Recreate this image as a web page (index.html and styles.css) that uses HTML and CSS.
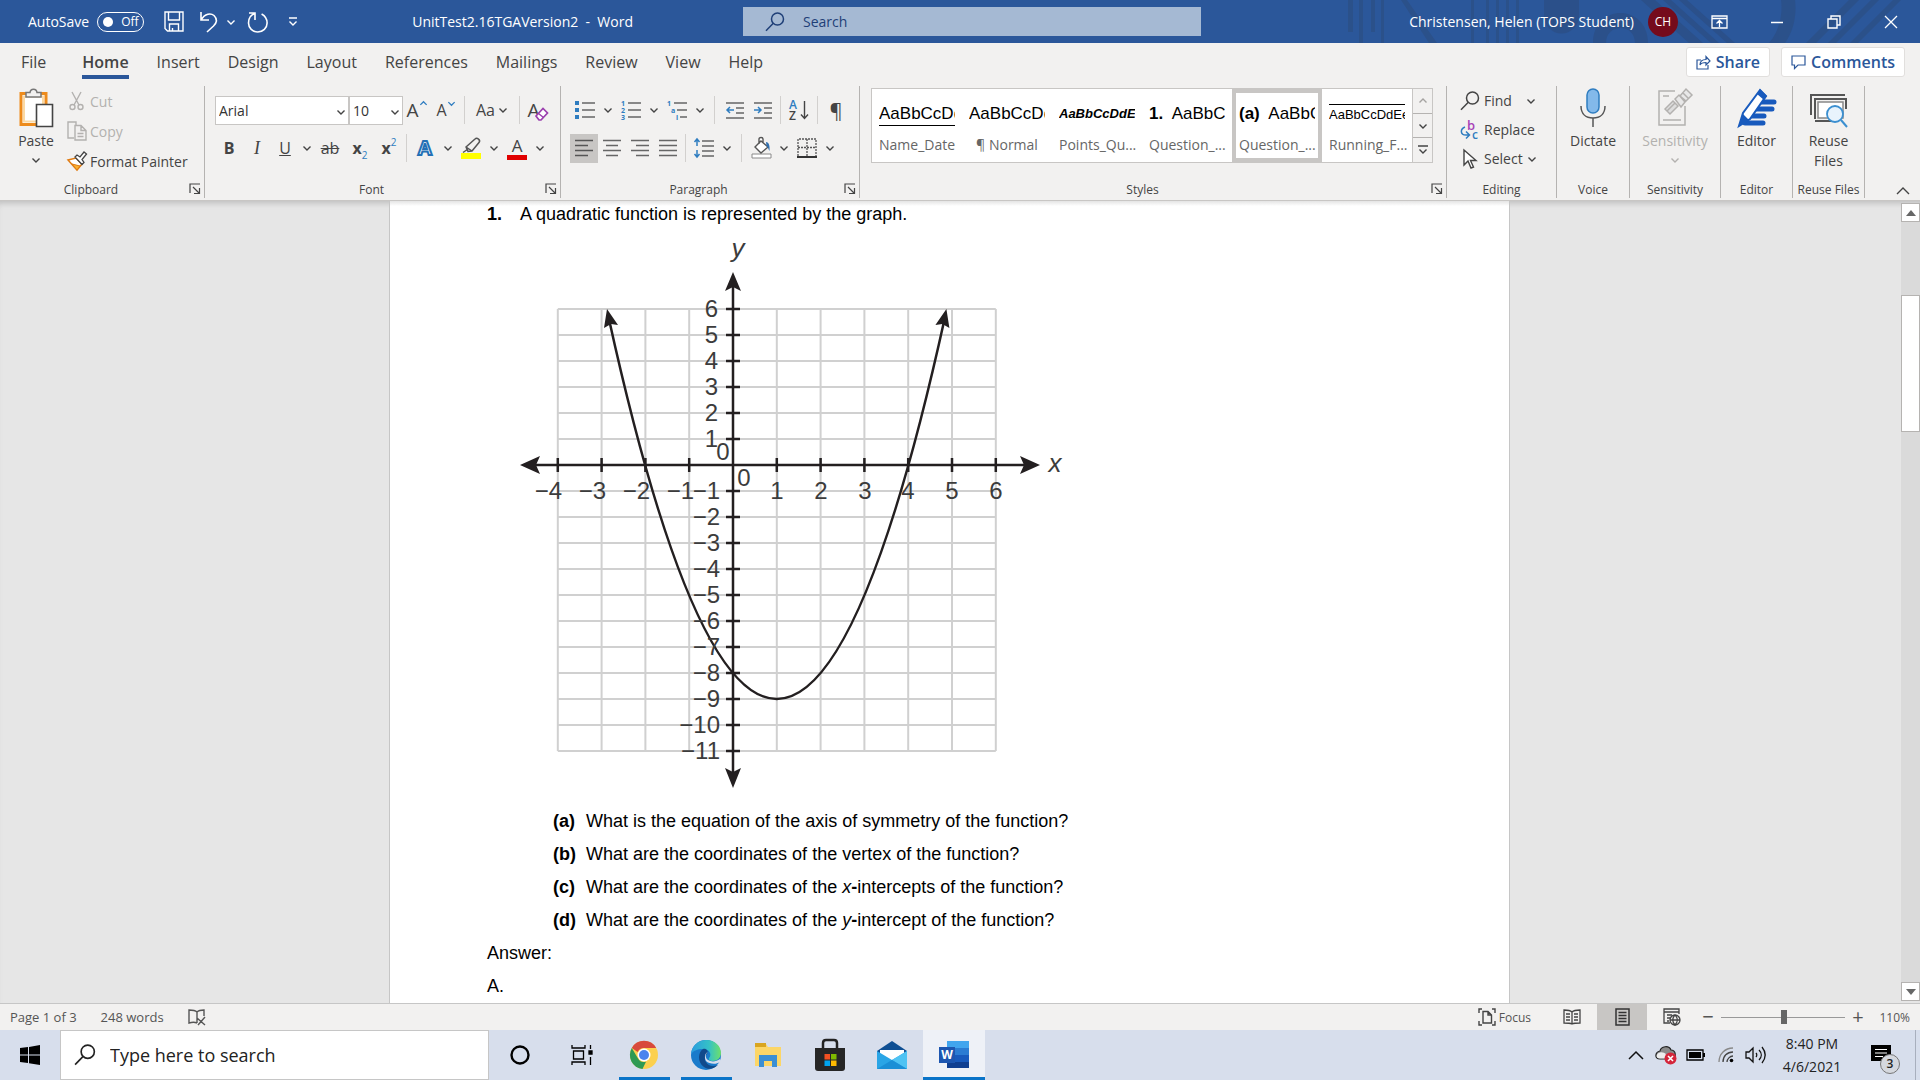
FILE: index.html
```html
<!DOCTYPE html>
<html lang="en">
<head>
    <meta charset="UTF-8">
    <meta name="viewport" content="width=device-width, initial-scale=1.0">
    <title>UnitTest2.16TGAVersion2 - Word</title>
    <link rel="stylesheet" href="styles.css">
</head>
<body>
    <!-- Shared icons -->
    <svg class="sprite" aria-hidden="true">
        <symbol id="chev" viewBox="0 0 10 10"><path d="M1.5 3.5 5 7l3.500-3.500" fill="none" stroke="currentColor" stroke-width="1.4"/></symbol>
        <symbol id="chev-up" viewBox="0 0 10 10"><path d="M1.500 6.500 5 3l3.500 3.500" fill="none" stroke="currentColor" stroke-width="1.4"/></symbol>
        <symbol id="launch" viewBox="0 0 12 12"><path d="M1 10V1h10M4 4l6 6M10.500 5v5.500H5" fill="none" stroke="currentColor" stroke-width="1.2"/></symbol>
        <symbol id="glass" viewBox="0 0 20 20"><g fill="none" stroke="currentColor" stroke-width="1.500"><circle cx="12.500" cy="7" r="6"/><path d="M8.300 11.300 1 18.700"/></g></symbol>
    </svg>

    <!-- Title bar -->
    <header class="titlebar">
        <svg class="titlebar-art" viewBox="0 0 580 43" aria-hidden="true">
            <g fill="#2b4c80" opacity=".6">
                <path d="M7 0h5v32H7zM18 0h4v43h-4zM30 0h4v32h-4zM40 0h3v43h-3zM60 0h6l30 43h-8zM130 0h3v43h-3zM145 0h3v43h-3zM155 0h3v43h-3zM165 0h3v43h-3zM175 0h3v43h-3z"/>
                <path d="M203 0h35v16a17 17 0 0 1-35 0z"/>
                <path d="M252 43c0-40 55-40 55 0h-13c0-20-29-20-29 0z"/>
                <path d="M300 0h14l48 43h-14zM322 0h8l48 43h-8zM338 0h8l48 43h-8zM440 0h14c2 16-2 32-10 43h-16c10-11 14-28 12-43zM508 0h10l-43 43h-10zM530 0h8l-43 43h-8zM552 0h8l-43 43h-8z"/>
            </g>
        </svg>
        <div class="quick-access">
            <label class="autosave">AutoSave
                <input type="checkbox" class="autosave-input">
                <span class="autosave-switch">Off</span>
            </label>
            <button class="qa-btn" aria-label="Save"><svg width="20" height="21" viewBox="0 0 20 21" fill="none" stroke="#fff" stroke-width="1.400"><path d="M1 1h18v19H3.500L1 17.500zM4.500 1v8h11V1M5.500 20v-7h9v7M8.500 20v-3"/></svg></button>
            <button class="qa-btn" aria-label="Undo"><svg width="20" height="22" viewBox="0 0 20 22" fill="none" stroke="#fff" stroke-width="1.600"><path d="M2 1v8h8M2 9C6 2 12 2 15 4.500c4 4 2 8-.5 10.500L8 21"/></svg></button>
            <button class="qa-chev" aria-label="Undo history"><svg width="10" height="10"><use href="#chev"/></svg></button>
            <button class="qa-btn redo" aria-label="Redo"><svg width="22" height="22" viewBox="0 0 22 22" fill="none" stroke="#fff" stroke-width="1.600"><path d="M2 2h6v7M8 2.500C3 4 1.500 8 1.500 12a9.300 9 0 0 0 18.600 0c0-4-2-7-5.500-9"/></svg></button>
            <button class="qa-btn" aria-label="Customize Quick Access Toolbar"><svg width="10" height="12" viewBox="0 0 10 12" fill="none" stroke="#fff" stroke-width="1.400"><path d="M1 2h8M1.500 5.500 5 9l3.500-3.500"/></svg></button>
            <h1 class="doc-title">UnitTest2.16TGAVersion2&nbsp; -&nbsp; Word</h1>
        </div>
        <label class="title-search">
            <svg width="20" height="20"><use href="#glass"/></svg>
            <input type="search" placeholder="Search" aria-label="Search">
        </label>
        <div class="account">
            <span class="user-name">Christensen, Helen (TOPS Student)</span>
            <span class="avatar">CH</span>
            <button class="win-btn" aria-label="Ribbon Display Options"><svg width="17" height="14" viewBox="0 0 17 14" fill="none" stroke="#fff" stroke-width="1.300"><path d="M1 1h15v12H1zM1 3.500h15M8.500 12V6M5.500 8.500l3-3 3 3"/></svg></button>
            <button class="win-btn" aria-label="Minimize"><svg width="14" height="14" viewBox="0 0 14 14" stroke="#fff" stroke-width="1.500"><path d="M1 7.500h12"/></svg></button>
            <button class="win-btn" aria-label="Restore"><svg width="14" height="14" viewBox="0 0 14 14" fill="none" stroke="#fff" stroke-width="1.400"><path d="M1 4h9v9H1zM4 4V1h9v9h-3"/></svg></button>
            <button class="win-btn" aria-label="Close"><svg width="14" height="14" viewBox="0 0 14 14" stroke="#fff" stroke-width="1.300"><path d="m1 1 12 12M13 1 1 13"/></svg></button>
        </div>
    </header>

    <!-- Ribbon tabs -->
    <nav class="tabs">
        <a href="#file" class="tab tab-file">File</a>
        <a href="#home" class="tab active">Home</a>
        <a href="#insert" class="tab">Insert</a>
        <a href="#design" class="tab">Design</a>
        <a href="#layout" class="tab">Layout</a>
        <a href="#references" class="tab">References</a>
        <a href="#mailings" class="tab">Mailings</a>
        <a href="#review" class="tab">Review</a>
        <a href="#view" class="tab">View</a>
        <a href="#help" class="tab">Help</a>
        <div class="tab-actions">
            <button class="action-btn"><svg width="15" height="15" viewBox="0 0 15 15" fill="none" stroke="currentColor" stroke-width="1.200"><path d="M5 5H1v9h11v-4M4 10c0-4 3-5.500 6-5.500V1.500L14 6l-4 4V7.500C7 7.500 5 8 4 10z"/></svg>Share</button>
            <button class="action-btn"><svg width="15" height="15" viewBox="0 0 15 15" fill="none" stroke="currentColor" stroke-width="1.200"><path d="M1 1h13v9H7l-3.500 3.500V10H1z"/></svg>Comments</button>
        </div>
    </nav>

    <!-- Ribbon -->
    <section class="ribbon">
        <div class="group clipboard">
            <div class="group-body">
                <button class="big-btn paste">
                    <svg width="36" height="40" viewBox="0 0 36 40"><path d="M3 5.500h25v31H3z" fill="#fff" stroke="#ed8b1c" stroke-width="3"/><path d="M6 8.500h19v25H6z" fill="#fff" stroke="#fbd9a4" stroke-width="2"/><path d="M8 9V4.500h4C12.500 0 18.500 0 19 4.500h4V9z" fill="#f2f1f0" stroke="#777" stroke-width="1.500"/><path d="M18.500 16.500h16v22h-16z" fill="#fff" stroke="#444" stroke-width="1.600"/></svg>
                    <span>Paste</span>
                    <svg class="chev" width="10" height="10"><use href="#chev"/></svg>
                </button>
                <div class="stack clip-stack">
                    <button class="text-btn" disabled><svg width="20" height="20" viewBox="0 0 20 20" fill="none" stroke="currentColor" stroke-width="1.400"><path d="m5 1 7 13M14 1 7 14"/><circle cx="5.500" cy="16" r="2.500"/><circle cx="13.500" cy="16" r="2.500"/></svg>Cut</button>
                    <button class="text-btn" disabled><svg width="20" height="20" viewBox="0 0 20 20" fill="none" stroke="currentColor" stroke-width="1.400"><path d="M7 17H1V1h8v3M8 4.500h6l5 5V19H8zM14 4.500v5h5M10.500 12.500h6M10.500 15.500h6"/></svg>Copy</button>
                    <button class="text-btn"><svg width="20" height="20" viewBox="0 0 20 20"><path d="m1 9 8-2 6 6-5 6z" fill="#fff" stroke="#e07b12" stroke-width="1.500"/><path d="m5 13 8 2-3 4z" fill="#f9b233" stroke="#e07b12"/><path d="m8 6 2-2 3 2 4-5 2.500 2-4.500 5.500 2 3-2 2z" fill="#fff" stroke="#444" stroke-width="1.300"/></svg>Format Painter</button>
                </div>
            </div>
            <div class="group-name has-launcher">Clipboard<button class="launcher" aria-label="Clipboard settings"><svg width="12" height="12"><use href="#launch"/></svg></button></div>
        </div>

        <div class="group font">
            <div class="group-body rows">
                <div class="row">
                    <span class="combo combo-name"><select aria-label="Font"><option>Arial</option></select><svg width="10" height="10"><use href="#chev"/></svg></span>
                    <span class="combo combo-size"><select aria-label="Font size"><option>10</option></select><svg width="10" height="10"><use href="#chev"/></svg></span>
                    <button class="tool" aria-label="Grow font"><span class="letter lg">A</span><svg class="sup blue" width="9" height="9"><use href="#chev-up"/></svg></button>
                    <button class="tool wide" aria-label="Shrink font"><span class="letter">A</span><svg class="sup blue" width="9" height="9"><use href="#chev"/></svg></button>
                    <span class="sep"></span>
                    <button class="tool case" aria-label="Change case"><span class="letter">Aa</span><svg width="10" height="10"><use href="#chev"/></svg></button>
                    <span class="sep"></span>
                    <button class="tool wide" aria-label="Clear formatting"><span class="letter lg">A</span><svg class="eraser" width="14" height="14" viewBox="0 0 14 14"><path d="M1 9 8 1.500 12.500 6 6 13H4z" fill="#fff" stroke="#9b3fae" stroke-width="1.700"/><path d="m3.500 6.500 5 4" stroke="#9b3fae" stroke-width="1.500"/></svg></button>
                </div>
                <div class="row">
                    <button class="tool"><b>B</b></button>
                    <button class="tool"><i class="serif">I</i></button>
                    <button class="tool"><u>U</u></button>
                    <button class="drop" aria-label="Underline options"><svg width="10" height="10"><use href="#chev"/></svg></button>
                    <button class="tool wide"><s>ab</s></button>
                    <button class="tool wide script"><b>x</b><sub>2</sub></button>
                    <button class="tool script"><b>x</b><sup>2</sup></button>
                    <span class="sep"></span>
                    <button class="tool wide"><b class="effect">A</b></button>
                    <button class="drop" aria-label="Text effects"><svg width="10" height="10"><use href="#chev"/></svg></button>
                    <button class="tool wide" aria-label="Highlight"><svg width="22" height="22" viewBox="0 0 22 22"><path d="M1 16h20v6H1z" fill="#ffff00"/><path d="m6 10 9-8c2-2 6 1 4 3.500L12 14l-4 .5zM6 10l6 4M8 12l-5 3.500" fill="none" stroke="#555" stroke-width="1.500"/></svg></button>
                    <button class="drop" aria-label="Highlight colors"><svg width="10" height="10"><use href="#chev"/></svg></button>
                    <button class="tool wide"><span class="font-color">A</span></button>
                    <button class="drop" aria-label="Font colors"><svg width="10" height="10"><use href="#chev"/></svg></button>
                </div>
            </div>
            <div class="group-name has-launcher">Font<button class="launcher" aria-label="Font settings"><svg width="12" height="12"><use href="#launch"/></svg></button></div>
        </div>

        <div class="group paragraph">
            <div class="group-body rows">
                <div class="row">
                    <button class="tool wide" aria-label="Bullets"><svg width="20" height="20" viewBox="0 0 20 20"><path d="M0 1h4v4H0zM0 8h4v4H0zM0 15h4v4H0z" fill="#2f7dc0"/><path d="M7 3h13M7 10h13M7 17h13" stroke="#666" stroke-width="1.500"/></svg></button>
                    <button class="drop" aria-label="Bullet library"><svg width="10" height="10"><use href="#chev"/></svg></button>
                    <button class="tool wide" aria-label="Numbering"><svg width="20" height="20" viewBox="0 0 20 20"><path d="M7 3h13M7 10h13M7 17h13" stroke="#666" stroke-width="1.500"/><g class="tiny"><text x="0" y="6">1</text><text x="0" y="13">2</text><text x="0" y="20">3</text></g></svg></button>
                    <button class="drop" aria-label="Numbering library"><svg width="10" height="10"><use href="#chev"/></svg></button>
                    <button class="tool wide" aria-label="Multilevel list"><svg width="20" height="20" viewBox="0 0 20 20"><path d="M7 3h13M10 10h10M13 17h7" stroke="#666" stroke-width="1.500"/><g class="tiny"><text x="0" y="6">1</text><text x="4" y="13">a</text><text x="9" y="20">i</text></g></svg></button>
                    <button class="drop" aria-label="List library"><svg width="10" height="10"><use href="#chev"/></svg></button>
                    <span class="sep loose"></span>
                    <button class="tool" aria-label="Decrease indent"><svg width="20" height="18" viewBox="0 0 20 18"><path d="M1 2h18M11 7h8M11 12h8M1 17h18" stroke="#666" stroke-width="1.500"/><path d="M9 9H2M5 6 2 9l3 3" fill="none" stroke="#2f7dc0" stroke-width="1.500"/></svg></button>
                    <button class="tool" aria-label="Increase indent"><svg width="20" height="18" viewBox="0 0 20 18"><path d="M1 2h18M11 7h8M11 12h8M1 17h18" stroke="#666" stroke-width="1.500"/><path d="M1 9h7M5 6l3 3-3 3" fill="none" stroke="#2f7dc0" stroke-width="1.500"/></svg></button>
                    <span class="sep"></span>
                    <button class="tool wide" aria-label="Sort"><svg width="22" height="22" viewBox="0 0 22 22"><text x="1" y="10" class="sort-a">A</text><text x="1" y="21" class="sort-z">Z</text><path d="M16.500 2v17M13 15.500l3.500 4 3.500-4" fill="none" stroke="#444" stroke-width="1.400"/></svg></button>
                    <span class="sep"></span>
                    <button class="tool wide" aria-label="Show paragraph marks"><span class="pilcrow">¶</span></button>
                </div>
                <div class="row">
                    <button class="tool selected" aria-label="Align left"><svg width="18" height="18" viewBox="0 0 18 18" stroke="#555" stroke-width="1.500"><path d="M0 1.500h18M0 6.500h13M0 11.500h18M0 16.500h13"/></svg></button>
                    <button class="tool" aria-label="Center"><svg width="18" height="18" viewBox="0 0 18 18" stroke="#666" stroke-width="1.500"><path d="M0 1.500h18M3 6.500h12M0 11.500h18M3 16.500h12"/></svg></button>
                    <button class="tool" aria-label="Align right"><svg width="18" height="18" viewBox="0 0 18 18" stroke="#666" stroke-width="1.500"><path d="M0 1.500h18M5 6.500h13M0 11.500h18M5 16.500h13"/></svg></button>
                    <button class="tool" aria-label="Justify"><svg width="18" height="18" viewBox="0 0 18 18" stroke="#666" stroke-width="1.500"><path d="M0 1.500h18M0 6.500h18M0 11.500h18M0 16.500h18"/></svg></button>
                    <span class="sep"></span>
                    <button class="tool wide" aria-label="Line spacing"><svg width="20" height="20" viewBox="0 0 20 20" fill="none"><path d="M8 3h12M8 8h12M8 13h12M8 18h12" stroke="#666" stroke-width="1.500"/><path d="M3 1v7M.5 4 3 1l2.500 3M3 12v7M.5 16 3 19l2.500-3" stroke="#2f7dc0" stroke-width="1.500"/></svg></button>
                    <button class="drop" aria-label="Line spacing options"><svg width="10" height="10"><use href="#chev"/></svg></button>
                    <span class="sep loose"></span>
                    <button class="tool" aria-label="Shading"><svg width="22" height="22" viewBox="0 0 22 22"><path d="M1 17h19v4H1z" fill="#fff" stroke="#8a8a8a"/><path d="m10 4 7 6-7 6-6-6zM8 7V2c0-2 4-2 4 0v4" fill="#fff" stroke="#555" stroke-width="1.400"/><path d="M15 5c3 0 4 4 3.500 9-1.500-2-1-4-3-5z" fill="#2f6fb0"/></svg></button>
                    <button class="drop" aria-label="Shading colors"><svg width="10" height="10"><use href="#chev"/></svg></button>
                    <button class="tool wide" aria-label="Borders"><svg width="20" height="20" viewBox="0 0 20 20" fill="none" stroke="#555"><path d="M1 18V1h18v17M10 1v17M1 9.500h18" stroke-dasharray="2 1" stroke-width="1.300"/><path d="M0 19h20" stroke="#333" stroke-width="2"/></svg></button>
                    <button class="drop" aria-label="Border options"><svg width="10" height="10"><use href="#chev"/></svg></button>
                </div>
            </div>
            <div class="group-name has-launcher">Paragraph<button class="launcher" aria-label="Paragraph settings"><svg width="12" height="12"><use href="#launch"/></svg></button></div>
        </div>

        <div class="group styles">
            <div class="group-body">
                <div class="gallery">
                    <button class="style"><span class="sample underlined">AaBbCcDd</span><span class="style-name">Name_Date</span></button>
                    <button class="style"><span class="sample">AaBbCcDd</span><span class="style-name">¶ Normal</span></button>
                    <button class="style"><span class="sample small strong-italic">AaBbCcDdE</span><span class="style-name">Points_Qu...</span></button>
                    <button class="style"><span class="sample"><b>1.</b>&nbsp; AaBbC</span><span class="style-name">Question_...</span></button>
                    <button class="style current"><span class="sample"><b>(a)</b>&nbsp; AaBbCc</span><span class="style-name">Question_...</span></button>
                    <button class="style"><span class="sample small overlined">AaBbCcDdEe</span><span class="style-name">Running_F...</span></button>
                    <div class="gallery-scroll">
                        <button aria-label="Previous row" disabled><svg width="10" height="10"><use href="#chev-up"/></svg></button>
                        <button aria-label="Next row"><svg width="10" height="10"><use href="#chev"/></svg></button>
                        <button aria-label="More styles"><svg width="10" height="12" viewBox="0 0 10 12" fill="none" stroke="currentColor" stroke-width="1.400"><path d="M0 2h10M1.500 5.500 5 9l3.500-3.500"/></svg></button>
                    </div>
                </div>
            </div>
            <div class="group-name has-launcher">Styles<button class="launcher" aria-label="Styles pane"><svg width="12" height="12"><use href="#launch"/></svg></button></div>
        </div>

        <div class="group editing">
            <div class="group-body">
                <div class="stack edit-stack">
                    <button class="text-btn"><svg width="20" height="20"><use href="#glass"/></svg>Find<svg class="chev" width="10" height="10"><use href="#chev"/></svg></button>
                    <button class="text-btn"><svg width="20" height="20" viewBox="0 0 20 20"><text x="7" y="10" class="rep-b">b</text><text x="12" y="19" class="rep-c">c</text><path d="M5 7c-5 2-5 8 1 8h3M6 11.500 9.500 15 6 18.500" fill="none" stroke="#2f7dc0" stroke-width="1.500"/></svg>Replace</button>
                    <button class="text-btn"><svg width="20" height="20" viewBox="0 0 20 20"><path d="M4 1v15l4-4 3 7 2.500-1-3-6.500H16z" fill="#fff" stroke="#444" stroke-width="1.400"/></svg>Select<svg class="chev near" width="10" height="10"><use href="#chev"/></svg></button>
                </div>
            </div>
            <div class="group-name">Editing</div>
        </div>

        <div class="group voice">
            <div class="group-body">
                <button class="big-btn">
                    <svg width="28" height="40" viewBox="0 0 28 40" fill="none"><rect x="8" y="1" width="12" height="24" rx="6" fill="#83b9ea" stroke="#2f7dc0" stroke-width="1.500"/><path d="M2 18c0 8 5 12 12 12s12-4 12-12M14 30v9" stroke="#555" stroke-width="1.500"/></svg>
                    <span>Dictate</span>
                </button>
            </div>
            <div class="group-name">Voice</div>
        </div>

        <div class="group sensitivity">
            <div class="group-body">
                <button class="big-btn" disabled>
                    <svg width="36" height="40" viewBox="0 0 36 40" fill="none" stroke="#b3b1af" stroke-width="1.500"><path d="M18 3H2v34h26V18M6 8h6M6 32h18"/><path d="m8 21 8-8 5 5-8 8zM10 23l8-8" fill="#ddd"/><path d="m18 11 4-4 6 7-4 5zM23 8l6-7 6 6-6 6zM26 5l6 6" fill="#e8e8e8"/></svg>
                    <span>Sensitivity</span>
                    <svg class="chev" width="10" height="10"><use href="#chev"/></svg>
                </button>
            </div>
            <div class="group-name">Sensitivity</div>
        </div>

        <div class="group editor">
            <div class="group-body">
                <button class="big-btn">
                    <svg width="40" height="40" viewBox="0 0 40 40"><path d="M20 14h17M16 21h19M12 28h15M8 35h18" stroke="#185abd" stroke-width="5" stroke-linecap="round"/><path d="M23 2 6 25 2 38l11-7L29 8z" fill="#fff" stroke="#185abd" stroke-width="2"/><path d="m23 1 7 7-3 4-7-6zM6 26l6 6-10 6z" fill="#185abd"/></svg>
                    <span>Editor</span>
                </button>
            </div>
            <div class="group-name">Editor</div>
        </div>

        <div class="group reuse">
            <div class="group-body">
                <button class="big-btn">
                    <svg width="40" height="40" viewBox="0 0 40 40" fill="none"><path d="M2 27V7h34M6 31V11h31v10M6 33h16" stroke="#555" stroke-width="2"/><path d="M9 14h25v16H9z" fill="#fff" stroke="#888" stroke-width="1.500"/><circle cx="26" cy="26" r="8" fill="#e8f3fc" stroke="#3b8fd0" stroke-width="1.800"/><path d="m32 32 6 7" stroke="#3b8fd0" stroke-width="2"/></svg>
                    <span>Reuse<br>Files</span>
                </button>
            </div>
            <div class="group-name">Reuse Files</div>
        </div>

        <button class="collapse" aria-label="Collapse the Ribbon"><svg width="14" height="10" viewBox="0 0 14 10" fill="none" stroke="#444" stroke-width="1.400"><path d="m1 8 6-6 6 6"/></svg></button>
    </section>

    <!-- Document -->
    <main class="workspace">
        <div class="canvas">
            <article class="page">
                <p class="question"><b>1.</b><span>A quadratic function is represented by the graph.</span></p>
                <svg class="graph" width="560" height="578" viewBox="0 0 560 578" role="img" aria-label="Graph of a parabola">
                    <!-- Grid -->
                    <path class="grid" d="M42.800 82v442M86.600 82v442M130.400 82v442M174.200 82v442M261.800 82v442M305.600 82v442M349.400 82v442M393.200 82v442M437 82v442M480.800 82v442M42.800 82h438M42.800 108h438M42.800 134h438M42.800 160h438M42.800 186h438M42.800 212h438M42.800 264h438M42.800 290h438M42.800 316h438M42.800 342h438M42.800 368h438M42.800 394h438M42.800 420h438M42.800 446h438M42.800 472h438M42.800 498h438M42.800 524h438"/>
                    <!-- Axes with tick marks -->
                    <path class="axis" d="M16 238h498M218 55v495"/>
                    <path class="axis" d="M42.800 231v14M86.600 231v14M130.400 231v14M174.200 231v14M261.800 231v14M305.600 231v14M349.400 231v14M393.200 231v14M437 231v14M480.800 231v14M211 82h14M211 108h14M211 134h14M211 160h14M211 186h14M211 212h14M211 264h14M211 290h14M211 316h14M211 342h14M211 368h14M211 394h14M211 420h14M211 446h14M211 472h14M211 498h14M211 524h14"/>
                    <path class="arrow" d="m5 238 20-9-4 9 4 9zM525 238l-20-9 4 9-4 9zM218 45l-8 19 8-4 8 4zM218 561l-8-20 8 4 8-4z"/>
                    <!-- y = (x - 1)^2 - 9 -->
                    <path class="curve" d="M93.500 90Q261.800 854 430 90"/>
                    <path class="arrow" d="m92 82-3 19 7-4 7 1zM431.400 82l3 19-7-4-7 1z"/>
                    <g class="labels end">
                        <text x="203" y="90">6</text><text x="203" y="116">5</text><text x="203" y="142">4</text><text x="203" y="168">3</text><text x="203" y="194">2</text><text x="203" y="220">1</text>
                        <text x="205" y="272">−1</text><text x="205" y="298">−2</text><text x="205" y="324">−3</text><text x="205" y="350">−4</text><text x="205" y="376">−5</text><text x="205" y="402">−6</text><text x="205" y="428">−7</text><text x="205" y="454">−8</text><text x="205" y="480">−9</text><text x="205" y="506">−10</text><text x="205" y="532">−11</text>
                        <text x="47" y="272">−4</text><text x="91" y="272">−3</text><text x="135" y="272">−2</text><text x="179" y="272">−1</text>
                    </g>
                    <g class="labels mid">
                        <text x="208" y="233">0</text><text x="229" y="259">0</text>
                        <text x="262" y="272">1</text><text x="306" y="272">2</text><text x="350" y="272">3</text><text x="393" y="272">4</text><text x="437" y="272">5</text><text x="481" y="272">6</text>
                        <text class="var" x="223" y="30">y</text><text class="var" x="540" y="245">x</text>
                    </g>
                </svg>
                <p class="part"><b>(a)</b><span>What is the equation of the axis of symmetry of the function?</span></p>
                <p class="part"><b>(b)</b><span>What are the coordinates of the vertex of the function?</span></p>
                <p class="part"><b>(c)</b><span>What are the coordinates of the <i>x</i><b>-</b>intercepts of the function?</span></p>
                <p class="part"><b>(d)</b><span>What are the coordinates of the <i>y</i><b>-</b>intercept of the function?</span></p>
                <p class="line">Answer:</p>
                <p class="line">A.</p>
            </article>
        </div>
        <div class="scrollbar">
            <button class="scroll-btn" aria-label="Scroll up"><svg width="10" height="6" viewBox="0 0 10 6"><path d="M0 6 5 0l5 6z" fill="#666"/></svg></button>
            <div class="scroll-track"><div class="scroll-thumb"></div></div>
            <button class="scroll-btn" aria-label="Scroll down"><svg width="10" height="6" viewBox="0 0 10 6"><path d="m0 0 5 6 5-6z" fill="#666"/></svg></button>
        </div>
    </main>

    <!-- Status bar -->
    <footer class="status">
        <span>Page 1 of 3</span>
        <span>248 words</span>
        <button class="status-btn" aria-label="Proofing errors"><svg width="18" height="17" viewBox="0 0 18 17" fill="none" stroke="#555" stroke-width="1.400"><path d="M9 14c-2-1-5-1-8 0V1c3 0 6 0 8 2 2-2 4-2 7-2v6M9 3v11M9 9l8 7M17 8l-7 8"/></svg></button>
        <div class="views">
            <button class="focus-btn"><svg width="18" height="18" viewBox="0 0 18 18" fill="none" stroke="#444" stroke-width="1.400"><path d="M1 5V1h3M14 1h3v4M1 13v4h3M14 17h3v-4M5 3.500h5l3.500 3.500v8H5zM10 3.500V7h3.500"/></svg>Focus</button>
            <button class="view-btn" aria-label="Read mode"><svg width="18" height="17" viewBox="0 0 18 17" fill="none" stroke="#444" stroke-width="1.300"><path d="M9 15c-2-1-5-1-8-1V1c3 0 6 0 8 2 2-2 5-2 8-2v13c-3 0-6 0-8 1zM9 3v12M3 5h4M3 8h4M3 11h4M11 5h4M11 8h4M11 11h4"/></svg></button>
            <button class="view-btn on" aria-label="Print layout"><svg width="15" height="18" viewBox="0 0 15 18" fill="none" stroke="#333" stroke-width="1.500"><path d="M1 1h13v16H1zM3.500 4.500h8M3.500 7.500h8M3.500 10.500h8M3.500 13.500h8"/></svg></button>
            <button class="view-btn" aria-label="Web layout"><svg width="18" height="18" viewBox="0 0 18 18" fill="none" stroke="#444" stroke-width="1.300"><path d="M7 15H1V1h15v5M1 4h15M4 7h5M4 10h3M4 13h2"/><circle cx="12" cy="12" r="5" fill="#f2f1f0"/><path d="M7 12h10M12 7c-3 3-3 7 0 10 3-3 3-7 0-10"/></svg></button>
            <button class="zoom-btn" aria-label="Zoom out">−</button>
            <input type="range" class="zoom" min="10" max="190" value="102" aria-label="Zoom">
            <button class="zoom-btn" aria-label="Zoom in">+</button>
            <span class="zoom-value">110%</span>
        </div>
    </footer>

    <!-- Taskbar -->
    <nav class="taskbar" aria-label="Taskbar">
        <button class="start" aria-label="Start"><svg width="20" height="20" viewBox="0 0 20 20"><path d="M0 3 8 2v7.500H0zM9 1.900 20 0v9.500H9zM0 10.500h8V18l-8-1zM9 10.500h11V20L9 18.200z"/></svg></button>
        <label class="task-search"><svg width="22" height="22"><use href="#glass"/></svg><input type="search" placeholder="Type here to search" aria-label="Type here to search"></label>
        <button class="app" aria-label="Cortana"><svg width="22" height="22" viewBox="0 0 22 22"><circle cx="11" cy="11" r="8.500" fill="none" stroke="#000" stroke-width="2.400"/></svg></button>
        <button class="app" aria-label="Task View"><svg width="22" height="20" viewBox="0 0 22 20" fill="none" stroke="#000" stroke-width="1.300"><path d="M1 0v3h13V0M1 20v-3h13v3M2.500 6h10v8h-10zM19.500 0v4M19.500 12v8"/><path d="M18 6h3v3h-3z" fill="#000"/></svg></button>
        <button class="app running" aria-label="Chrome"><svg width="30" height="30" viewBox="0 0 30 30"><circle cx="15" cy="15" r="14" fill="#fcd04e"/><path d="M2.800 8A14 14 0 0 1 27.200 8H15a7 7 0 0 0-6.300 4z" fill="#d8493c"/><path d="M2.800 8 9 18.500a7 7 0 0 0 8 3.200L13.500 29A14 14 0 0 1 2.800 8z" fill="#2f9a53"/><circle cx="15" cy="15" r="6.500" fill="#fff"/><circle cx="15" cy="15" r="5" fill="#4a84ee"/></svg></button>
        <button class="app running" aria-label="Edge"><svg width="30" height="30" viewBox="0 0 30 30"><defs><linearGradient id="edge-top" x1="0" x2="1"><stop offset="0" stop-color="#2a9be0"/><stop offset=".6" stop-color="#35c1c6"/><stop offset="1" stop-color="#6ee06a"/></linearGradient></defs><circle cx="15" cy="15" r="15" fill="#1a7bcb"/><path d="M0 14C1 5 8 0 15 0c9 0 15 6 15 13 0 5-4 8-8 8-3 0-5-1-4-3 3-3 1-9-6-9-6 0-10 2-12 5z" fill="url(#edge-top)"/><path d="M12 9c-5 3-6 13 1 18 4 3 10 2 14-2-5 2-10 1-12-3-2-3-1-6 1-8 2-3-1-6-4-5z" fill="#114a8b"/><path d="M17 12c-3 2-3 6 0 8s8 2 12-1v3c-4 3-11 2-14-1-2-4-1-8 2-9z" fill="#d7deec"/></svg></button>
        <button class="app" aria-label="File Explorer"><svg width="28" height="26" viewBox="0 0 28 26"><path d="M1 2h11l2 3h13v19H1z" fill="#fcd667"/><path d="M1 1h11v4H1z" fill="#d9a520"/><path d="M5 13h18v12h-5v-6h-8v6H5z" fill="#3b8fd4"/></svg></button>
        <button class="app" aria-label="Microsoft Store"><svg width="30" height="32" viewBox="0 0 30 32"><path d="M8 10V4c0-2 1-3 3-3h8c2 0 3 1 3 3v6" fill="none" stroke="#222" stroke-width="2.500"/><path d="M0 9h30v20c0 2-1 3-3 3H3c-2 0-3-1-3-3z" fill="#262626"/><path d="M9.500 15H15v5.500H9.500z" fill="#f25022"/><path d="M16 15h5.500v5.500H16z" fill="#7fba00"/><path d="M9.500 21.500H15V27H9.500z" fill="#00a4ef"/><path d="M16 21.500h5.500V27H16z" fill="#ffb900"/></svg></button>
        <button class="app" aria-label="Mail"><svg width="30" height="28" viewBox="0 0 30 28"><path d="M0 10 15 0l15 10v4H0z" fill="#0f4f93"/><path d="M3 9h24v10H3z" fill="#fff"/><path d="m0 10 15 9L30 10v18H0z" fill="#2aa5e6"/><path d="m15 19 15-9v18z" fill="#4fc3f3"/><path d="m15 19 15 9H0z" fill="#1b8fd6"/></svg></button>
        <button class="app running open" aria-label="Word"><svg width="30" height="28" viewBox="0 0 30 28"><path d="M8 0h22v7H8z" fill="#41a5ee"/><path d="M8 7h22v7H8z" fill="#2b7cd3"/><path d="M8 14h22v7H8z" fill="#185abd"/><path d="M8 21h22v6H8z" fill="#103f91"/><path d="M0 6h16v16H0z" fill="#1d56b0"/><text x="8" y="18" class="word-w">W</text></svg></button>
        <div class="tray">
            <button class="tray-btn" aria-label="Show hidden icons"><svg width="16" height="10" viewBox="0 0 16 10" fill="none" stroke="#111" stroke-width="1.500"><path d="m1 9 7-7 7 7"/></svg></button>
            <button class="tray-btn" aria-label="OneDrive"><svg width="22" height="20" viewBox="0 0 22 20"><path d="M5 14c-6 0-5-7 0-8 1-5 9-6 11-1 5 0 6 8 1 9z" fill="#8b8b8b" stroke="#222" stroke-width="1.200"/><path d="M5 13.500c-5 0-4-5 0-6 4-1 8 3 11 6z" fill="#eee"/><circle cx="15.500" cy="13.500" r="6" fill="#d4263b"/><path d="m13 11 5 5M18 11l-5 5" stroke="#fff" stroke-width="1.600"/></svg></button>
            <button class="tray-btn" aria-label="Battery"><svg width="20" height="12" viewBox="0 0 20 12"><path d="M1 1h16v10H1z" fill="none" stroke="#000" stroke-width="1.300"/><path d="M3 3h12v6H3zM17 4h2v4h-2z"/></svg></button>
            <button class="tray-btn" aria-label="Network"><svg width="16" height="16" viewBox="0 0 16 16" fill="none" stroke-width="1.300"><path d="M1 15C1 7 7 1 15 1" stroke="#888"/><path d="M5 15C5 9 9 5 15 5M9 15c0-3 3-6 6-6" stroke="#444"/><circle cx="13.500" cy="13.500" r="1.800" fill="#000"/></svg></button>
            <button class="tray-btn" aria-label="Volume"><svg width="22" height="18" viewBox="0 0 22 18" fill="none" stroke="#111" stroke-width="1.300"><path d="M1 6h3l4-4v14l-4-4H1zM11 7c1 1 1 3 0 4M14 4c3 3 3 7 0 10M17 1c4 5 4 11 0 16"/></svg></button>
            <time class="clock" datetime="2021-04-06T20:40">8:40 PM<br>4/6/2021</time>
            <button class="notify" aria-label="Notifications"><svg width="20" height="20" viewBox="0 0 20 20"><path d="M0 0h20v16h-5l-4 4v-4H0z"/><path d="M4 4.500h12M4 8h12M4 11.500h8" stroke="#fff" stroke-width="1.200"/></svg><span class="notify-count">3</span></button>
            <span class="desktop-edge"></span>
        </div>
    </nav>
</body>
</html>
```
FILE: styles.css
```css
/* --- GENERAL STYLING --- */
* {
    box-sizing: border-box;
}

body {
    margin: 0;
    height: 100vh;
    display: grid;
    grid-template-rows: 43px 40px 118px 1fr 27px 50px;
    font-family: "Open Sans", "Noto Sans", sans-serif;
    font-size: 14px;
    color: #444;
    background: #e6e6e6;
    overflow: hidden;
}

button {
    font: inherit;
    color: inherit;
    background: none;
    border: 0;
    padding: 0;
    display: flex;
    align-items: center;
    justify-content: center;
}

input {
    font: inherit;
    color: inherit;
    background: none;
    border: 0;
    padding: 0;
    min-width: 0;
    outline: none;
}

p, h1 {
    margin: 0;
}

svg {
    flex: none;
    overflow: visible;
}

.sprite {
    position: absolute;
    width: 0;
    height: 0;
}

/* --- TITLE BAR --- */
.titlebar {
    display: grid;
    grid-template-columns: 1fr 458px 720px;
    align-items: center;
    position: relative;
    background: #2b579a;
    color: #fff;
}

.titlebar > * {
    position: relative;
}

.titlebar .titlebar-art {
    position: absolute;
    top: 0;
    right: 0;
    width: 580px;
    height: 43px;
    overflow: hidden;
}

.quick-access {
    display: flex;
    align-items: center;
    padding-left: 28px;
}

.autosave {
    display: flex;
    align-items: center;
    gap: 8px;
    margin-right: 12px;
}

.autosave-input {
    position: absolute;
    opacity: 0;
}

.autosave-switch {
    display: flex;
    align-items: center;
    gap: 8px;
    width: 47px;
    height: 20px;
    padding-left: 5px;
    border: 1px solid #fff;
    border-radius: 10px;
    font-size: 12px;
}

.autosave-switch::before {
    content: "";
    width: 10px;
    height: 10px;
    border-radius: 5px;
    background: #fff;
}

.qa-btn {
    width: 35px;
    height: 40px;
}

.qa-chev {
    width: 10px;
    height: 40px;
    margin-right: 4px;
}

.doc-title {
    margin-left: auto;
    margin-right: 110px;
    font-size: 14px;
    font-weight: normal;
}

.title-search {
    display: flex;
    align-items: center;
    gap: 18px;
    height: 29px;
    padding-left: 22px;
    background: #a5b9d3;
    color: #1f3f77;
}

.title-search input {
    flex: 1;
}

input::placeholder {
    color: inherit;
    opacity: 1;
}

.account {
    display: flex;
    align-items: center;
    justify-content: flex-end;
    padding-right: 2px;
}

.avatar {
    width: 30px;
    height: 30px;
    margin: 0 13px 0 14px;
    border-radius: 15px;
    background: #750b1c;
    font-size: 12px;
    line-height: 30px;
    text-align: center;
}

.win-btn {
    width: 57px;
    height: 43px;
}

/* --- RIBBON TABS --- */
.tabs {
    display: flex;
    align-items: center;
    gap: 28px;
    padding: 0 16px 0 21px;
    background: #f2f1f0;
    font-size: 16px;
}

.tab {
    height: 32px;
    line-height: 30px;
    color: #444;
    text-decoration: none;
}

.tab-file {
    margin-right: 8px;
}

.tab.active {
    font-weight: 600;
    border-bottom: 4px solid #2b579a;
}

.tab-actions {
    display: flex;
    gap: 11px;
    margin: 0 0 2px auto;
}

.action-btn {
    gap: 5px;
    height: 30px;
    padding: 0 9px;
    background: #fff;
    border: 1px solid #e1dfdd;
    border-radius: 3px;
    color: #2b579a;
    font-size: 16px;
    font-weight: 600;
}

/* --- RIBBON --- */
.ribbon {
    display: flex;
    padding-top: 3px;
    background: #f2f1f0;
    border-bottom: 1px solid #c8c6c4;
}

.group {
    display: flex;
    flex-direction: column;
    height: 112px;
    border-right: 1px solid #b5b3b1;
}

.group-body {
    flex: 1;
    display: flex;
}

.group-name {
    position: relative;
    height: 16px;
    line-height: 16px;
    font-size: 12px;
    text-align: center;
}

.has-launcher {
    padding-right: 32px;
}

.launcher {
    position: absolute;
    right: 3px;
    top: 1px;
}

.clipboard { width: 205px; padding-left: 10px; }
.font { width: 356px; padding-left: 10px; }
.paragraph { width: 299px; padding-left: 9px; }
.styles { flex: 1; padding-left: 11px; }
.editing { width: 110px; }
.voice { width: 73px; }
.sensitivity { width: 91px; }
.editor { width: 72px; }
.reuse { width: 72px; }

.rows {
    flex-direction: column;
    gap: 8px;
    padding-top: 9px;
}

.row {
    display: flex;
    align-items: center;
    height: 30px;
}

.tool {
    position: relative;
    width: 28px;
    height: 29px;
    font-size: 16px;
}

.wide {
    width: 30px;
}

.drop {
    width: 16px;
    height: 29px;
}

.selected {
    background: #c8c6c4;
}

.sep {
    width: 1px;
    height: 28px;
    margin: 0 3px;
    background: #d2d0ce;
}

.sep.loose {
    margin: 0 6px;
}

.combo {
    position: relative;
    display: flex;
    height: 29px;
    background: #fff;
    border: 1px solid #c8c6c4;
}

.combo select {
    width: 100%;
    padding: 0 3px;
    border: 0;
    background: none;
    appearance: none;
    font: inherit;
    color: #333;
}

.combo svg {
    position: absolute;
    right: 2px;
    top: 10px;
}

.combo-name { width: 134px; }
.combo-size { width: 54px; }

.case {
    width: 48px;
    gap: 3px;
}

.letter { font-size: 16px; }
.letter.lg { font-size: 19px; }
.sup { align-self: flex-start; margin-top: 3px; }
.blue { color: #2f7dc0; }

.eraser {
    align-self: flex-end;
    margin: 0 0 4px -5px;
}

.serif { font-family: "Liberation Serif", serif; font-size: 18px; }
.script sub, .script sup { font-size: 10px; line-height: 10px; color: #2f7dc0; }
.script sub { align-self: flex-end; margin-bottom: 3px; }
.script sup { align-self: flex-start; margin-top: 3px; }

.effect {
    font-size: 20px;
    line-height: 24px;
    color: #fff;
    -webkit-text-stroke: 2px #2470b5;
}

.font-color {
    width: 20px;
    font-size: 17px;
    line-height: 18px;
    border-bottom: 5px solid #e00000;
}

.pilcrow { font-size: 20px; }
.tiny { font-size: 7px; font-weight: bold; fill: #2f7dc0; }
.sort-a { font-size: 12px; font-weight: 600; fill: #2f7dc0; }
.sort-z { font-size: 12px; font-weight: 600; fill: #444; }
.rep-b { font-size: 13px; font-weight: 600; fill: #a843b8; }
.rep-c { font-size: 12px; font-weight: 600; fill: #2f7dc0; }

.stack {
    display: flex;
    flex-direction: column;
    align-items: flex-start;
}

.clip-stack {
    margin-left: 5px;
}

.edit-stack {
    padding-left: 13px;
}

.text-btn {
    height: 29px;
    gap: 4px;
}

.clip-stack .text-btn {
    height: 30px;
    gap: 3px;
}

.stack .chev { margin-left: 10px; }
.stack .chev.near { margin-left: 0; }

.text-btn:disabled, .big-btn:disabled {
    color: #b3b1af;
}

.big-btn {
    flex: 1;
    flex-direction: column;
    justify-content: flex-start;
    padding-top: 2px;
    line-height: 20px;
}

.big-btn span {
    margin-top: 3px;
}

.big-btn .chev {
    margin-top: 4px;
}

.paste {
    flex: none;
    width: 52px;
}

/* --- STYLE GALLERY --- */
.gallery {
    flex: 1;
    display: flex;
    height: 75px;
    margin: 2px 13px 0 0;
    background: #fff;
    border: 1px solid #c8c6c4;
}

.style {
    flex-direction: column;
    align-items: stretch;
    width: 90px;
    padding: 0 7px;
    overflow: hidden;
}

.style.current {
    padding: 0 3px;
    border: 4px solid #c8c6c4;
}

.sample {
    height: 22px;
    margin: 7px 0 9px;
    font: 17px/20px "Liberation Sans", sans-serif;
    color: #000;
    text-align: left;
    white-space: nowrap;
    overflow: hidden;
}

.sample.small { font-size: 13px; }
.strong-italic { font-weight: bold; font-style: italic; }
.underlined { border-bottom: 1px solid #000; }
.overlined { border-top: 1px solid #000; }

.style-name {
    line-height: 20px;
    color: #666;
    white-space: nowrap;
}

.gallery-scroll {
    display: flex;
    flex-direction: column;
    width: 20px;
    margin-left: auto;
    border-left: 1px solid #c8c6c4;
    background: #f2f1f0;
}

.gallery-scroll button {
    flex: 1;
}

.gallery-scroll button + button {
    border-top: 1px solid #b5b3b1;
}

.gallery-scroll button:disabled {
    color: #a5a3a1;
}

.collapse {
    width: 56px;
    align-items: flex-end;
    padding: 0 0 4px 20px;
}

/* --- DOCUMENT --- */
.workspace {
    display: flex;
    min-height: 0;
    background: #e6e6e6;
    box-shadow: inset 0 6px 6px -4px #bbb;
}

.canvas {
    flex: 1;
    overflow: hidden;
}

.page {
    width: 1121px;
    max-width: 100%;
    height: 100%;
    margin: 0 auto;
    padding-left: 97px;
    background: #fff linear-gradient(#e4e4e4, #fff 5px);
    border: solid #c6c6c6;
    border-width: 0 1px;
    font-family: "Liberation Sans", Arial, sans-serif;
    font-size: 18px;
    line-height: 33px;
    color: #000;
    overflow: hidden;
}

.question {
    display: flex;
    line-height: 26px;
}

.question b {
    width: 33px;
}

.graph {
    display: block;
    margin-left: 28px;
}

.part {
    display: flex;
    padding-left: 66px;
}

.part > b {
    width: 33px;
}

/* --- GRAPH --- */
.grid { stroke: #d0d0d0; stroke-width: 2; fill: none; }
.axis { stroke: #231f20; stroke-width: 2.5; fill: none; }
.curve { stroke: #231f20; stroke-width: 2.5; fill: none; }
.arrow { fill: #231f20; }
.labels { font-size: 24px; fill: #3c3c3c; }
.labels.end { text-anchor: end; }
.labels.mid { text-anchor: middle; }
.var { font-size: 26px; font-style: italic; }

/* --- SCROLLBAR --- */
.scrollbar {
    display: flex;
    flex-direction: column;
    width: 22px;
    padding: 2px 1px 2px 2px;
}

.scroll-btn {
    height: 19px;
    background: #fff;
    border: 1px solid #b5b3b1;
}

.scroll-track {
    flex: 1;
    padding-top: 73px;
    background: #dadada;
}

.scroll-thumb {
    height: 20%;
    background: #fff;
    border: 1px solid #b5b3b1;
}

/* --- STATUS BAR --- */
.status {
    display: flex;
    align-items: center;
    gap: 24px;
    padding-left: 10px;
    border-top: 1px solid #c6c6c6;
    background: #f2f1f0;
    font-size: 13px;
    color: #555;
}

.views {
    display: flex;
    align-items: center;
    height: 100%;
    margin-left: auto;
    padding-right: 11px;
    font-size: 12px;
}

.focus-btn {
    gap: 3px;
    margin-right: 16px;
}

.view-btn {
    width: 50px;
    height: 100%;
}

.view-btn.on {
    background: #c8c6c4;
}

.zoom-btn {
    width: 22px;
    font-size: 20px;
    line-height: 20px;
}

.zoom {
    width: 124px;
    height: 16px;
    margin: 0 2px;
    appearance: none;
    background: linear-gradient(#999, #999) center / 100% 1px no-repeat;
}

.zoom::-webkit-slider-thumb {
    appearance: none;
    width: 6px;
    height: 14px;
    background: #666;
}

.zoom-value {
    width: 41px;
    text-align: right;
}

/* --- TASKBAR --- */
.taskbar {
    display: flex;
    background: #d7deec;
    color: #222;
}

.start {
    width: 60px;
}

.task-search {
    display: flex;
    align-items: center;
    gap: 14px;
    width: 429px;
    padding-left: 13px;
    background: #fff;
    border: 1px solid #c6c6c6;
    font-size: 18px;
}

.task-search input {
    flex: 1;
}

.app {
    width: 62px;
    padding-bottom: 1px;
}

.app.running {
    background: linear-gradient(#0a74c8, #0a74c8) bottom / 51px 3px no-repeat;
}

.app.open {
    background-color: #eef1f7;
    background-size: 100% 3px;
}

.word-w {
    font-size: 12px;
    font-weight: bold;
    text-anchor: middle;
    fill: #fff;
}

.tray {
    display: flex;
    align-items: stretch;
    margin-left: auto;
}

.tray-btn {
    width: 30px;
}

.clock {
    width: 82px;
    padding-top: 2px;
    line-height: 23px;
    text-align: center;
}

.notify {
    position: relative;
    width: 62px;
    padding-right: 6px;
}

.notify-count {
    position: absolute;
    left: 27px;
    top: 24px;
    width: 20px;
    height: 20px;
    border: 1px solid #777;
    border-radius: 10px;
    background: #d5d8de;
    font-size: 12px;
    font-weight: 600;
    line-height: 18px;
    text-align: center;
}

.desktop-edge {
    width: 6px;
    border-left: 1px solid #a8afbd;
}
```
